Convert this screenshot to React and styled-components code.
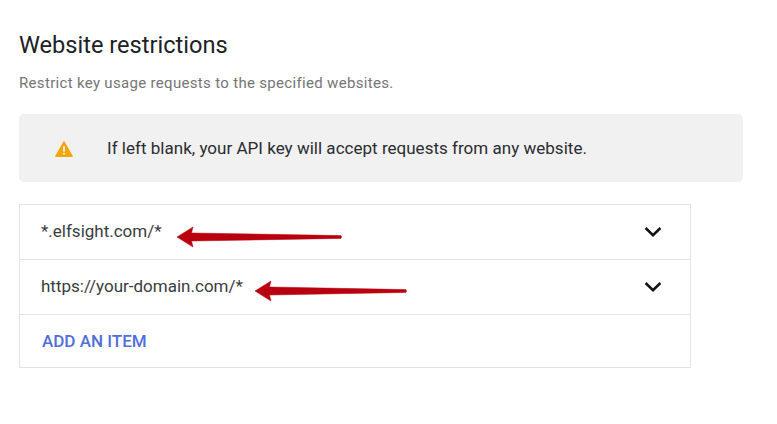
import React from "react";
import styled, { createGlobalStyle } from "styled-components";

const Global = createGlobalStyle`
  html, body { margin: 0; padding: 0; background: #fff; }
  body { font-family: Roboto, "Liberation Sans", sans-serif; width: 777px; height: 424px; overflow: hidden; }
`;
const Page = styled.main`
  display: flex;
  flex-direction: column;
  align-items: flex-start;
  padding: 31px 0 0 19px;
`;
const Title = styled.h2`
  margin: 0;
  font-size: 23.6px;
  line-height: 29px;
  font-weight: 400;
  color: #202124;
`;
const Subtitle = styled.p`
  margin: 13px 0 0;
  font-size: 15px;
  line-height: 20px;
  letter-spacing: 0.32px;
  color: #757575;
`;
const Notice = styled.div`
  display: flex;
  align-items: center;
  width: 724px;
  height: 68px;
  margin-top: 21px;
  background: #f1f1f1;
  border-radius: 5px;
  box-sizing: border-box;
  padding-left: 36px;
`;
const WarningIcon = styled.svg`
  display: block;
  flex: none;
  margin-top: 1px;
`;
const NoticeText = styled.span`
  margin-left: 34px;
  font-size: 17px;
  line-height: 22px;
  letter-spacing: 0.02px;
  color: #2b2c30;
`;
const List = styled.div`
  width: 672px;
  margin-top: 22px;
  border: 1px solid #e3e3e3;
  box-sizing: border-box;
`;
const Row = styled.div`
  display: flex;
  align-items: center;
  height: ${(p) => p.$h}px;
  box-sizing: border-box;
  padding: 0 28px 0 21px;
  border-bottom: ${(p) => (p.$last ? "none" : "1px solid #e3e3e3")};
`;
const RowText = styled.span`
  font-size: 17px;
  line-height: 22px;
  color: #3a3c40;
  margin-top: -2px;
`;
const Arrow = styled.svg`
  display: block;
  margin-left: ${(p) => p.$gap}px;
  margin-top: ${(p) => p.$top}px;
  flex: none;
`;
const Chevron = styled.svg`
  display: block;
  margin-left: auto;
  flex: none;
`;
const AddItem = styled.button`
  border: 0;
  background: none;
  padding: 0 0 0 1px;
  font: 500 17px/22px Roboto, "Liberation Sans", sans-serif;
  color: #4f6fdc;
`;

const RedArrow = ({ width, gap, top }) => (
  <Arrow $gap={gap} $top={top} width={width} height={22} viewBox={`0 0 ${width} 22`}>
    <path
      d={`M1 11 L17 1 L15.5 7 L${width - 1} 9.6 Q${width} 11 ${width - 1} 12.4 L15.5 15 L17 21 Z`}
      fill="#b9000e"
      stroke="#b9000e"
      strokeWidth="0.5"
      strokeLinejoin="round"
    />
  </Arrow>
);

const Down = () => (
  <Chevron width="18" height="12" viewBox="0 0 18 12">
    <path d="M1.6 2 L9 9.2 L16.4 2" fill="none" stroke="#111" strokeWidth="2.5" />
  </Chevron>
);

export default function App() {
  return (
    <Page>
      <Global />
      <Title>Website restrictions</Title>
      <Subtitle>Restrict key usage requests to the specified websites.</Subtitle>
      <Notice>
        <WarningIcon width="18" height="16" viewBox="0 0 18 16">
          <path d="M9 0.6 L17.5 15.4 L0.5 15.4 Z" fill="#f2a600" stroke="#f2a600" strokeLinejoin="round" />
          <rect x="8.1" y="5.2" width="1.8" height="5.4" fill="#f1f1f1" />
          <rect x="8.1" y="11.8" width="1.8" height="1.8" fill="#f1f1f1" />
        </WarningIcon>
        <NoticeText>If left blank, your API key will accept requests from any website.</NoticeText>
      </Notice>
      <List>
        <Row $h={55}>
          <RowText>*.elfsight.com/*</RowText>
          <RedArrow width={166} gap={14} top={10} />
          <Down />
        </Row>
        <Row $h={55}>
          <RowText>https://your-domain.com/*</RowText>
          <RedArrow width={153} gap={11} top={8} />
          <Down />
        </Row>
        <Row $h={52} $last>
          <AddItem>ADD AN ITEM</AddItem>
        </Row>
      </List>
    </Page>
  );
}
